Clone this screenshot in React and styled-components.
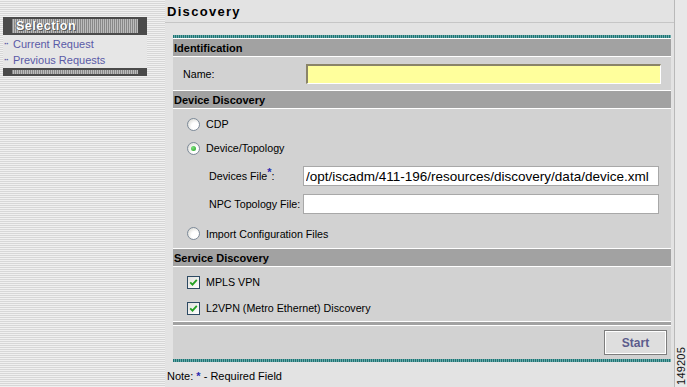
import React from 'react';
import styled, { createGlobalStyle } from 'styled-components';

const Global = createGlobalStyle`
  html, body { margin: 0; padding: 0; }
  body {
    background: #e3e3e3;
    font-family: "Liberation Sans", Arial, sans-serif;
    font-size: 10.7px;
    color: #000;
  }
`;

const Page = styled.div`
  display: flex;
  width: 687px;
  height: 387px;
  overflow: hidden;
  background: #e3e3e3;
`;

const Sidebar = styled.aside`
  width: 165px;
  flex: none;
  box-sizing: border-box;
  padding-top: 17px;
  background: repeating-linear-gradient(180deg, #f0f0f0 0 1px, #d7d7d7 1px 2px);
`;

const SelBox = styled.div`
  margin-left: 3px;
  width: 144px;
`;

const SelBar = styled.div`
  box-sizing: border-box;
  height: ${p => p.$h}px;
  background: #4a4a4a;
  padding: 2px 9px 2px 9px;
  display: flex;
`;

const SelStripes = styled.div`
  flex: 1;
  display: flex;
  align-items: center;
  padding-left: 4px;
  background: repeating-linear-gradient(90deg, #888 0 1px, #bcbcbc 1px 2px);
  color: #fff;
  font-weight: bold;
  font-size: 12.5px;
  letter-spacing: 0.5px;
  text-shadow: 1px 1px 0 #555, -1px 0 0 #666;
`;

const SelLinks = styled.ul`
  list-style: none;
  margin: 0;
  padding: 1px 0 0;
  background: #e6e6e6;
`;

const SelLink = styled.li`
  height: 16px;
  display: flex;
  align-items: center;
  color: #5a5aa6;
  font-size: 11px;
`;

const Bullet = styled.span`
  width: 9px;
  padding-left: 1px;
  font-size: 9px;
  letter-spacing: -1px;
  color: #5a5aa6;
  font-weight: bold;
`;

const Main = styled.main`
  flex: none;
  width: 509px;
  border-right: 1px solid #b9b9b9;
  display: flex;
  flex-direction: column;
`;

const TitleBar = styled.div`
  height: 22px;
  border-bottom: 1px solid #c6c6c6;
  display: flex;
  align-items: center;
  padding-left: 2px;
`;

const Title = styled.h1`
  margin: 0;
  font-size: 13px;
  font-weight: bold;
  letter-spacing: 1.3px;
  font-family: "Liberation Sans", Arial, sans-serif;
`;

const Panel = styled.section`
  margin: 12px 3px 0 8px;
  width: 498px;
  display: flex;
  flex-direction: column;
`;

const TealBar = styled.div`
  height: 3px;
  background: repeating-linear-gradient(90deg, #1e7474 0 1px, #6aa9a9 1px 2px);
  border-bottom: ${p => (p.$white ? '1px solid #fff' : 'none')};
`;

const SectionHeader = styled.div`
  height: 17px;
  background: #a2a2a2;
  border-bottom: 1px solid #fff;
  display: flex;
  align-items: center;
  padding-left: 1px;
  font-weight: bold;
  font-size: 11px;
`;

const Body = styled.div`
  background: #d2d2d2;
  border-bottom: 1px solid #fff;
  display: flex;
  flex-direction: column;
  padding: ${p => p.$pad};
  gap: ${p => p.$gap || 0}px;
`;

const NameRow = styled.div`
  height: 33px;
  display: grid;
  grid-template-columns: 123px 355px;
  align-items: center;
  padding-left: 10px;
`;

const SubRow = styled.div`
  height: 28px;
  display: grid;
  grid-template-columns: 94px 356px;
  align-items: center;
  padding-left: 36px;
  margin-top: ${p => p.$mt || 0}px;
`;

const Label = styled.label`
  font-size: 10.7px;
  white-space: nowrap;
`;

const Req = styled.sup`
  color: #2b2bb0;
  font-size: 11px;
  vertical-align: 0;
  position: relative;
  top: -4px;
  font-weight: bold;
`;

const TextInput = styled.input`
  box-sizing: border-box;
  height: 20px;
  width: 100%;
  margin: 0;
  padding: 0 2px;
  font-family: "Liberation Sans", Arial, sans-serif;
  font-size: 13.5px;
  color: #000;
  background: ${p => (p.$yellow ? '#ffff9c' : '#fff')};
  border: 1px solid #a8a8a8;
  ${p =>
    p.$yellow &&
    `border-top: 2px solid #8a8468; border-left: 2px solid #8a8468; border-right: 1px solid #fff; border-bottom: 1px solid #fff;`}
  outline: none;
`;

const ChoiceRow = styled.div`
  height: ${p => p.$h || 24}px;
  margin-top: ${p => p.$mt || 0}px;
  display: flex;
  align-items: center;
  gap: 6px;
  padding-left: 14px;
  font-size: 10.7px;
`;

const Radio = styled.span`
  box-sizing: border-box;
  width: 13px;
  height: 13px;
  border-radius: 50%;
  border: 1px solid #7d8a99;
  background: radial-gradient(circle at 65% 65%, #ffffff 0 35%, #e4e4e0 70%, #cfd0cc 100%);
  display: flex;
  align-items: center;
  justify-content: center;
  &::after {
    content: '';
    display: ${p => (p.$on ? 'block' : 'none')};
    width: 5px;
    height: 5px;
    border-radius: 50%;
    background: radial-gradient(circle at 35% 35%, #7fe07f, #21a121);
  }
`;

const Check = styled.span`
  box-sizing: border-box;
  width: 13px;
  height: 13px;
  border: 1px solid #2d4a63;
  background: linear-gradient(135deg, #e0e0dc, #fff);
  display: flex;
  align-items: center;
  justify-content: center;
`;

const ServiceSep = styled.div`
  height: 3px;
  background: #a2a2a2;
  border-bottom: 1px solid #fff;
`;

const ButtonRow = styled.div`
  height: 33px;
  background: #d2d2d2;
  display: flex;
  align-items: center;
  justify-content: flex-end;
  padding-right: 4px;
`;

const Button = styled.button`
  box-sizing: border-box;
  width: 63px;
  height: 25px;
  margin: 0;
  background: #dedede;
  border: 1px solid #7d7d7d;
  box-shadow: inset 1px 1px 0 #fff, inset -1px -1px 0 #fff;
  font-family: "Liberation Sans", Arial, sans-serif;
  font-weight: bold;
  font-size: 12px;
  color: #5c5c8c;
  padding: 0;
`;

const Note = styled.p`
  margin: 8px 0 0 2px;
  font-size: 11px;
  line-height: 13px;
`;

const Star = styled.span`
  color: #2b2bb0;
  font-weight: bold;
`;

const RightStrip = styled.div`
  flex: 1;
  display: flex;
  flex-direction: column;
  justify-content: flex-end;
  align-items: center;
  padding-bottom: 2px;
  background: #e8e8e8;
`;

const FigNo = styled.span`
  writing-mode: vertical-rl;
  transform: rotate(180deg);
  font-size: 11px;
  letter-spacing: 0.2px;
  color: #111;
`;

const CheckMark = () => (
  <svg width="9" height="9" viewBox="0 0 9 9">
    <path d="M1.2 4.3 L3.5 6.6 L7.8 1.8" fill="none" stroke="#22a022" strokeWidth="1.8" />
  </svg>
);

export default function App() {
  return (
    <>
      <Global />
      <Page>
        <Sidebar>
          <SelBox>
            <SelBar $h={18}>
              <SelStripes>Selection</SelStripes>
            </SelBar>
            <SelLinks>
              <SelLink><Bullet>··</Bullet>Current Request</SelLink>
              <SelLink><Bullet>··</Bullet>Previous Requests</SelLink>
            </SelLinks>
            <SelBar $h={8}>
              <SelStripes />
            </SelBar>
          </SelBox>
        </Sidebar>
        <Main>
          <TitleBar>
            <Title>Discovery</Title>
          </TitleBar>
          <Panel>
            <TealBar $white />
            <SectionHeader>Identification</SectionHeader>
            <Body $pad="0">
              <NameRow>
                <Label>Name:</Label>
                <TextInput $yellow defaultValue="" />
              </NameRow>
            </Body>
            <SectionHeader>Device Discovery</SectionHeader>
            <Body $pad="3px 0 2px">
              <ChoiceRow><Radio />CDP</ChoiceRow>
              <ChoiceRow><Radio $on />Device/Topology</ChoiceRow>
              <SubRow $mt={2}>
                <Label>Devices File<Req>*</Req>:</Label>
                <TextInput defaultValue="/opt/iscadm/411-196/resources/discovery/data/device.xml" />
              </SubRow>
              <SubRow>
                <Label>NPC Topology File:</Label>
                <TextInput defaultValue="" />
              </SubRow>
              <ChoiceRow $h={25} $mt={3}><Radio />Import Configuration Files</ChoiceRow>
            </Body>
            <SectionHeader>Service Discovery</SectionHeader>
            <Body $pad="3px 0 1px" $gap={2}>
              <ChoiceRow><Check><CheckMark /></Check>MPLS VPN</ChoiceRow>
              <ChoiceRow><Check><CheckMark /></Check>L2VPN (Metro Ethernet) Discovery</ChoiceRow>
            </Body>
            <ServiceSep />
            <ButtonRow>
              <Button type="button">Start</Button>
            </ButtonRow>
            <TealBar />
          </Panel>
          <Note>Note: <Star>*</Star> - Required Field</Note>
        </Main>
        <RightStrip>
          <FigNo>149205</FigNo>
        </RightStrip>
      </Page>
    </>
  );
}
